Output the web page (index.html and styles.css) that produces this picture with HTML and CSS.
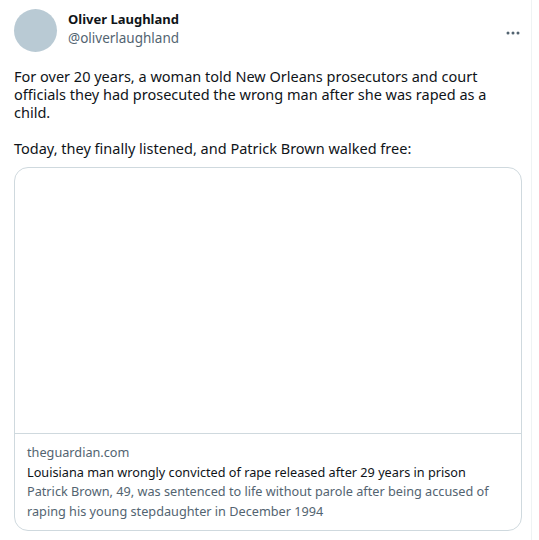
FILE: index.html
```html
<!DOCTYPE html>
<html lang="en">
<head>
    <meta charset="UTF-8">
    <meta name="viewport" content="width=device-width, initial-scale=1.0">
    <title>Tweet</title>
    <link rel="stylesheet" href="styles.css">
</head>
<body>
    <article class="tweet">
        <header class="tweet-head">
            <div class="avatar"></div>
            <div class="author">
                <span class="name">Oliver Laughland</span>
                <span class="handle">@oliverlaughland</span>
            </div>
            <div class="more">
                <svg width="14" height="4" viewBox="0 0 14 4"><circle cx="2" cy="2" r="1.5"/><circle cx="7" cy="2" r="1.5"/><circle cx="12" cy="2" r="1.5"/></svg>
            </div>
        </header>
        <p class="tweet-text">For over 20 years, a woman told New Orleans prosecutors and court officials they had prosecuted the wrong man after she was raped as a child.<br><br>Today, they finally listened, and Patrick Brown walked free:</p>
        <div class="card">
            <div class="card-media"></div>
            <div class="card-body">
                <div class="card-domain">theguardian.com</div>
                <div class="card-title">Louisiana man wrongly convicted of rape released after 29 years in prison</div>
                <div class="card-desc">Patrick Brown, 49, was sentenced to life without parole after being accused of raping his young stepdaughter in December 1994</div>
            </div>
        </div>
    </article>
</body>
</html>
```

FILE: styles.css
```css
body {
    margin: 0;
    background-color: #fff;
    font-family: "Noto Sans", "Open Sans", sans-serif;
    color: #0f1419;
}
.tweet {
    width: 532px;
    height: 540px;
    padding: 9px 0 0 14px;
    border-right: 1px solid #eff3f4;
    box-sizing: border-box;
}
.tweet-head {
    display: flex;
    align-items: flex-start;
    height: 43px;
}
.avatar {
    width: 43px;
    height: 43px;
    border-radius: 50%;
    background-color: #b9cad4;
}
.author {
    display: flex;
    flex-direction: column;
    margin-left: 11px;
    padding-top: 1px;
    flex: 1;
}
.name {
    font-weight: 700;
    font-size: 13px;
    line-height: 19px;
}
.handle {
    font-size: 13.5px;
    line-height: 19px;
    color: #536471;
}
.more {
    margin: 9px 11px 0 0;
    fill: #536471;
}
.tweet-text {
    margin: 15px 0 0;
    width: 508px;
    font-size: 14.5px;
    line-height: 18px;
}
.card {
    margin-top: 10px;
    width: 508px;
    height: 364px;
    border: 1px solid #cfd9de;
    border-radius: 14px;
    box-sizing: border-box;
    display: flex;
    flex-direction: column;
    overflow: hidden;
}
.card-media {
    height: 265px;
    border-bottom: 1px solid #cfd9de;
}
.card-body {
    padding: 9px 12px 0;
    font-size: 12.7px;
    line-height: 19.5px;
}
.card-domain,
.card-desc {
    color: #536471;
}
```
